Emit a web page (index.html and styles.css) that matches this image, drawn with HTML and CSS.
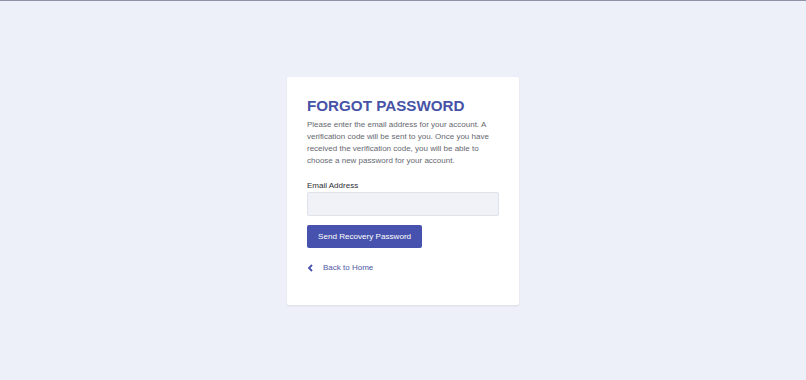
FILE: index.html
```html
<!DOCTYPE html>
<html lang="en">
<head>
    <meta charset="UTF-8">
    <meta name="viewport" content="width=device-width, initial-scale=1.0">
    <title>Forgot Password</title>
    <link rel="stylesheet" href="styles.css">
</head>
<body>
    <div class="page">
        <div class="card">
            <h1 class="card-title">FORGOT PASSWORD</h1>
            <p class="card-text">Please enter the email address for your account. A verification code will be sent to you. Once you have received the verification code, you will be able to choose a new password for your account.</p>
            <label class="label" for="email">Email Address</label>
            <input class="input" type="email" id="email">
            <button class="btn">Send Recovery Password</button>
            <a class="back" href="#">
                <svg class="back-icon" width="7" height="8" viewBox="0 0 7 8">
                    <path d="M5 1 L2 4 L5 7" fill="none" stroke="#4652ad" stroke-width="1.8"/>
                </svg>
                <span>Back to Home</span>
            </a>
        </div>
    </div>
</body>
</html>
```

FILE: styles.css
```css
html, body {
    margin: 0;
    padding: 0;
}
body {
    font-family: "Liberation Sans", Arial, Helvetica, sans-serif;
    background: #edf0f8;
    border-top: 1px solid #8f93a6;
}
.page {
    height: 379px;
    display: flex;
    align-items: center;
    justify-content: center;
}
.card {
    width: 192px;
    height: 188px;
    padding: 20px;
    margin-top: 1px;
    background: white;
    border-radius: 2px;
    box-shadow: 0 1px 2px rgba(0,0,0,.08);
    display: flex;
    flex-direction: column;
    align-items: flex-start;
}
.card-title {
    margin: 0;
    font-size: 15.2px;
    font-weight: bold;
    color: #4753a7;
    line-height: 17px;
}
.card-text {
    margin: 5px 0 0;
    font-size: 8px;
    line-height: 12px;
    color: #666870;
}
.label {
    margin-top: 14px;
    font-size: 8px;
    line-height: 10px;
    color: #2c2e33;
}
.input {
    box-sizing: border-box;
    width: 192px;
    height: 24px;
    margin: 1px 0 0;
    background: #f0f2f7;
    border: 1px solid #dfe2ea;
    border-radius: 2px;
    outline: 0;
}
.btn {
    margin-top: 9px;
    height: 23px;
    padding: 0 11px;
    background: #4652ad;
    color: white;
    border: none;
    border-radius: 2px;
    font-family: inherit;
    font-size: 8.1px;
    cursor: pointer;
}
.back {
    margin-top: 15px;
    display: flex;
    align-items: center;
    gap: 9px;
    font-size: 8px;
    line-height: 10px;
    color: #4e58a5;
    text-decoration: none;
}
.back-icon {
    display: block;
}
```
